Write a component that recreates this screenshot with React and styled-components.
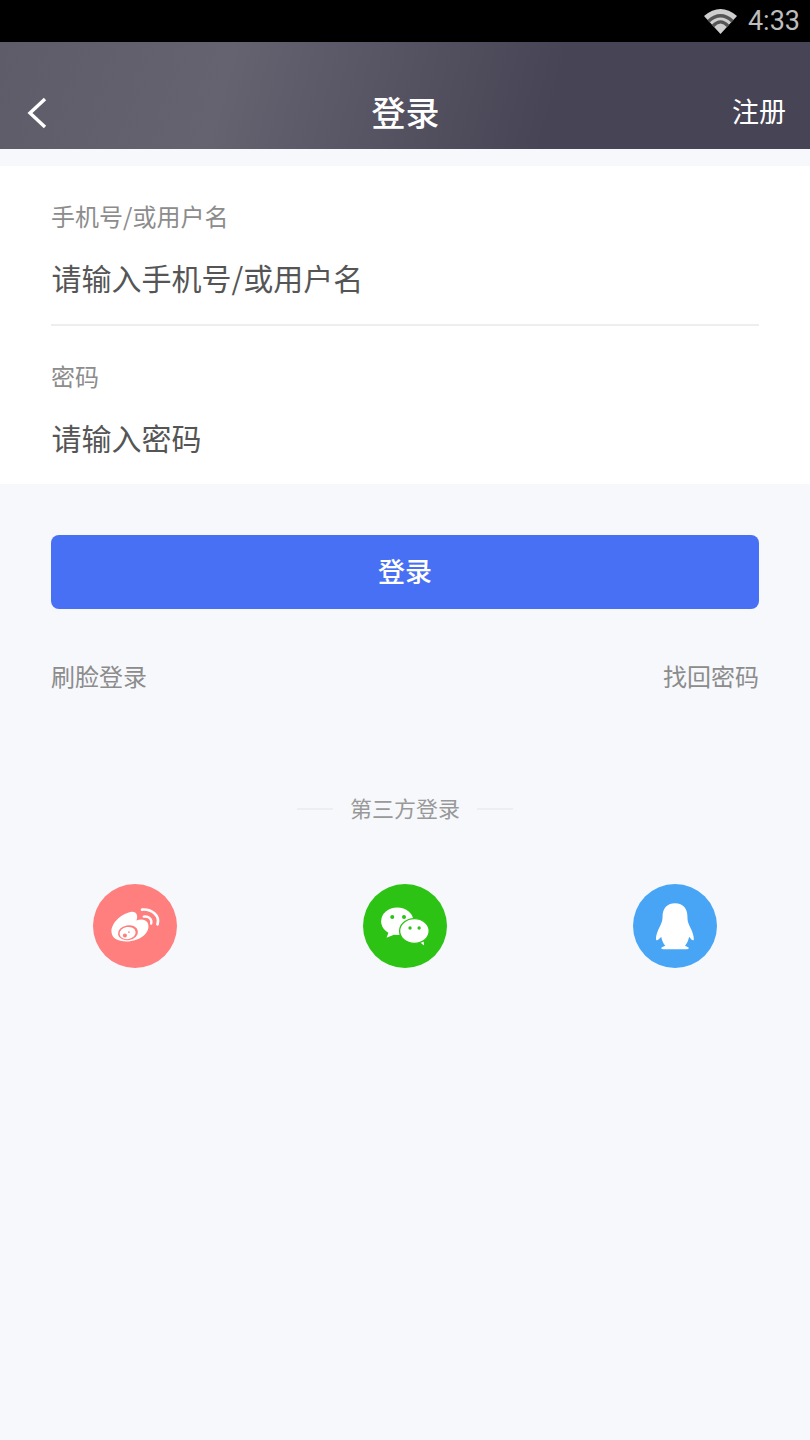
import React from "react";
import styled, { createGlobalStyle } from "styled-components";

function App() {
  return (
    <Application>
      <GlobalStyle />
      <StatusBar>
        <WifiIcon />
        <Clock>4:33</Clock>
      </StatusBar>

      <Header>
        <BackButton aria-label="返回">
          <svg width="22" height="32" viewBox="0 0 22 32" fill="none">
            <path d="M20 2 L5 16 L20 30" stroke="#fff" strokeWidth="3.4" />
          </svg>
        </BackButton>
        <Title>登录</Title>
        <RegisterLink>注册</RegisterLink>
      </Header>

      <FormCard>
        <Field $divider>
          <FieldLabel>手机号/或用户名</FieldLabel>
          <FieldHint>请输入手机号/或用户名</FieldHint>
        </Field>
        <Field>
          <FieldLabel>密码</FieldLabel>
          <FieldHint>请输入密码</FieldHint>
        </Field>
      </FormCard>

      <Actions>
        <SubmitButton>登录</SubmitButton>
        <LinkRow>
          <TextLink>刷脸登录</TextLink>
          <TextLink>找回密码</TextLink>
        </LinkRow>
      </Actions>

      <Divider>
        <DividerLine />
        <DividerText>第三方登录</DividerText>
        <DividerLine />
      </Divider>

      <SocialRow>
        <SocialCircle $color="#ff7e7e">
          <WeiboIcon />
        </SocialCircle>
        <SocialCircle $color="#2dc315">
          <WechatIcon />
        </SocialCircle>
        <SocialCircle $color="#48a5f5">
          <QQIcon />
        </SocialCircle>
      </SocialRow>
    </Application>
  );
}

// icons, drawn in the coordinates of a 250 wide circle
const WifiIcon = () => (
  <svg width="33" height="25" viewBox="0 0 33 25">
    <path d="M0 7 Q16.5 -7 33 7 L16.5 25Z" fill="#cfcfcf" />
    <path d="M3.4 11 Q16.5 -0.8 29.6 11 L27.4 13.4 Q16.5 3.6 5.6 13.4Z" fill="#565656" />
    <path d="M7.8 15.8 Q16.5 6.8 25.2 15.8 L23 18.2 Q16.5 11 10 18.2Z" fill="#565656" />
  </svg>
);

const WeiboIcon = () => (
  <svg width="84" height="84" viewBox="40 42 250 250">
    <path
      d="M95 184 C93 162 120 131 152 125 C171 122 175 138 169 151 C187 142 207 150 205 170 C203 196 170 213 140 213 C113 213 96 203 95 184Z"
      fill="#fff"
    />
    <ellipse cx="144" cy="187" rx="30" ry="22" transform="rotate(-10 144 187)" fill="#ff7e7e" />
    <ellipse cx="143" cy="188" rx="24" ry="18" transform="rotate(-10 143 188)" fill="#fff" />
    <circle cx="135" cy="195" r="6" fill="#ff7e7e" />
    <circle cx="147" cy="185" r="2.5" fill="#ff7e7e" />
    <path d="M186 118 C216 116 240 136 232 162" fill="none" stroke="#fff" strokeWidth="8" strokeLinecap="round" />
    <path d="M191 139 C205 137 217 147 213 160" fill="none" stroke="#fff" strokeWidth="7" strokeLinecap="round" />
  </svg>
);

const WechatIcon = () => (
  <svg width="84" height="84" viewBox="40 42 250 250">
    <path d="M116 186 L110 202 L134 192Z" fill="#fff" />
    <ellipse cx="142" cy="153" rx="48" ry="41" fill="#fff" />
    <circle cx="127" cy="140" r="6" fill="#2dc315" />
    <circle cx="162" cy="140" r="6" fill="#2dc315" />
    <path d="M204 212 L222 225 L219 204Z" fill="#fff" />
    <ellipse cx="193" cy="182" rx="44" ry="37" fill="#fff" stroke="#2dc315" strokeWidth="4" />
    <circle cx="180" cy="173" r="5" fill="#2dc315" />
    <circle cx="207" cy="173" r="5" fill="#2dc315" />
  </svg>
);

const QQIcon = () => (
  <svg width="84" height="84" viewBox="40 42 250 250">
    <path
      d="M165 99 C140 99 128 116 128 138 C128 150 126 156 121 166 C114 180 107 195 109 209 C113 212 119 204 124 199 C126 210 130 219 136 226 L126 230 C122 233 125 236 130 236 L200 236 C206 236 208 232 204 230 L195 226 C201 218 205 210 207 199 C212 205 217 212 221 209 C222 195 215 180 208 166 C203 156 202 150 202 138 C202 116 190 99 165 99Z"
      fill="#fff"
    />
  </svg>
);

// styled components
const GlobalStyle = createGlobalStyle`
  html, body {
    margin: 0;
    padding: 0;
    background: #f6f8fc;
  }
  * {
    box-sizing: border-box;
  }
`;

const Application = styled.div`
  width: 810px;
  min-height: 1440px;
  background: #f6f8fc;
  font-family: "Noto Sans CJK SC", "Noto Sans", sans-serif;
`;

const StatusBar = styled.div`
  height: 42px;
  background: #000;
  display: flex;
  align-items: center;
  justify-content: flex-end;
  gap: 11px;
  padding-right: 10px;
`;

const Clock = styled.span`
  font-family: Roboto, sans-serif;
  font-size: 27px;
  color: #bdbdbd;
`;

const Header = styled.header`
  height: 107px;
  padding: 35px 24px 0 25px;
  display: grid;
  grid-template-columns: 1fr auto 1fr;
  align-items: center;
  background: linear-gradient(105deg, #5e5c69 0%, #656370 28%, #474455 68%, #474455 100%);
`;

const BackButton = styled.button`
  justify-self: start;
  display: flex;
  padding: 0;
  background: none;
  border: none;
`;

const Title = styled.h1`
  margin: 0;
  padding-bottom: 4px;
  font-size: 34px;
  font-weight: 500;
  color: #fff;
`;

const RegisterLink = styled.a`
  justify-self: end;
  padding-bottom: 6px;
  font-size: 27px;
  color: #fff;
`;

const FormCard = styled.section`
  margin-top: 17px;
  height: 318px;
  padding: 0 51px;
  background: #fff;
`;

const Field = styled.div`
  padding-top: 33px;
  padding-bottom: 26px;
  display: flex;
  flex-direction: column;
  gap: 23px;
  border-bottom: ${(props) => (props.$divider ? "2px solid #eeeeee" : "none")};
`;

const FieldLabel = styled.label`
  font-size: 24px;
  line-height: 34px;
  color: #8c8c8c;
`;

const FieldHint = styled.div`
  padding-left: 0.5px;
  font-size: 30px;
  line-height: 42px;
  color: #555555;
`;

const Actions = styled.div`
  padding: 51px 51px 0;
`;

const SubmitButton = styled.button`
  width: 100%;
  height: 74px;
  padding: 0 0 4px;
  border: none;
  border-radius: 8px;
  background: #4870f4;
  color: #fff;
  font-family: inherit;
  font-size: 27px;
  font-weight: 500;
`;

const LinkRow = styled.div`
  margin-top: 52px;
  display: flex;
  justify-content: space-between;
`;

const TextLink = styled.a`
  font-size: 24px;
  line-height: 30px;
  color: #8c8c8c;
`;

const Divider = styled.div`
  margin-top: 103px;
  display: flex;
  align-items: center;
  justify-content: center;
  gap: 17px;
`;

const DividerLine = styled.span`
  width: 36px;
  height: 2px;
  background: #eceef1;
`;

const DividerText = styled.span`
  padding-bottom: 4px;
  font-size: 22px;
  line-height: 26px;
  color: #999999;
`;

const SocialRow = styled.div`
  margin-top: 60px;
  display: grid;
  grid-template-columns: repeat(3, 270px);
  justify-items: center;
`;

const SocialCircle = styled.div`
  width: 84px;
  height: 84px;
  border-radius: 50%;
  background: ${(props) => props.$color};
  display: flex;
`;

export default App;
